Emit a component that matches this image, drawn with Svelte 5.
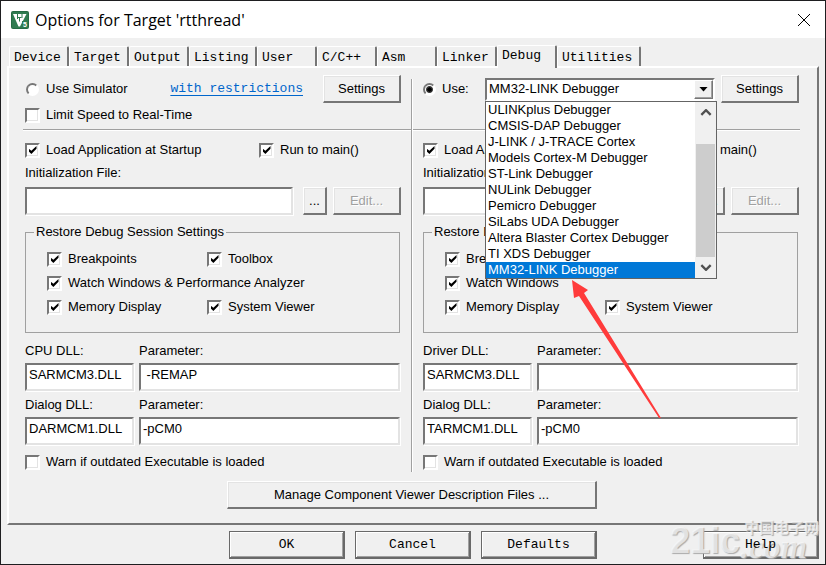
<script>
  const tabs = ['Device', 'Target', 'Output', 'Listing', 'User', 'C/C++', 'Asm', 'Linker', 'Debug', 'Utilities'];
  let activeTab = $state('Debug');

  const debuggers = [
    'ULINKplus Debugger',
    'CMSIS-DAP Debugger',
    'J-LINK / J-TRACE Cortex',
    'Models Cortex-M Debugger',
    'ST-Link Debugger',
    'NULink Debugger',
    'Pemicro Debugger',
    'SiLabs UDA Debugger',
    'Altera Blaster Cortex Debugger',
    'TI XDS Debugger',
    'MM32-LINK Debugger'
  ];
  let selected = $state('MM32-LINK Debugger');
  let mode = $state('target');

  const panes = $state([
    {
      id: 'sim',
      watch: 'Watch Windows & Performance Analyzer',
      rows: [
        { label: 'CPU DLL:', dll: 'SARMCM3.DLL', param: ' -REMAP' },
        { label: 'Dialog DLL:', dll: 'DARMCM1.DLL', param: '-pCM0' }
      ]
    },
    {
      id: 'target',
      watch: 'Watch Windows',
      rows: [
        { label: 'Driver DLL:', dll: 'SARMCM3.DLL', param: '' },
        { label: 'Dialog DLL:', dll: 'TARMCM1.DLL', param: '-pCM0' }
      ]
    }
  ]);
</script>

{#snippet check(text, checked = true)}
  <label class="check"><input type="checkbox" {checked}><span>{text}</span></label>
{/snippet}

<div class="dialog">
  <header>
    <svg class="logo" viewBox="0 0 18 18" aria-hidden="true">
      <rect width="18" height="18" rx="2" fill="#246b43" />
      <rect x="1" y="1" width="16" height="16" rx="1" fill="#2f7b50" />
      <path d="M2 3h13.500L9 15.500H7.500z" fill="#fff" />
      <path d="M6.500 3v5M11 3v4M6.500 6.500h4M8.500 6.500v4" stroke="#2f7b50" fill="none" />
      <rect x="11" y="10" width="6" height="7" fill="#2f7b50" />
      <text x="12" y="16" font-size="7" font-weight="bold" fill="#fff">5</text>
    </svg>
    <h1>Options for Target 'rtthread'</h1>
    <button class="close" aria-label="Close">
      <svg viewBox="0 0 12 12"><path d="M0 0l12 12M12 0L0 12" stroke="#000" fill="none" /></svg>
    </button>
  </header>

  <nav role="tablist">
    {#each tabs as tab}
      <button
        role="tab"
        class="tab"
        class:active={tab === activeTab}
        aria-selected={tab === activeTab}
        style:width="{Math.max(60, tab.length * 8 + 12)}px"
        onclick={() => (activeTab = tab)}
      >{tab}</button>
    {/each}
  </nav>

  <main>
    <div class="panes">
      {#each panes as pane}
        <section class={pane.id}>
          <div class="top">
            {#if pane.id === 'sim'}
              <div class="line">
                <label class="check"><input type="radio" name="mode" value="sim" bind:group={mode}><span>Use Simulator</span></label>
                <a href="#restrictions">with restrictions</a>
                <button class="btn settings">Settings</button>
              </div>
              {@render check('Limit Speed to Real-Time', false)}
            {:else}
              <div class="line">
                <label class="check use"><input type="radio" name="mode" value="target" bind:group={mode}><span>Use:</span></label>
                <div class="combo">
                  <select aria-label="Debugger" bind:value={selected}>
                    {#each debuggers as name}
                      <option>{name}</option>
                    {/each}
                  </select>
                  <span class="drop"></span>
                  <div class="list">
                    <ul role="listbox" aria-label="Debuggers">
                      {#each debuggers as name}
                        <li role="option" aria-selected={name === selected}>{name}</li>
                      {/each}
                    </ul>
                    <div class="scroll">
                      <svg viewBox="0 0 10 6"><path d="M1 5l4-4 4 4" /></svg>
                      <div class="thumb"></div>
                      <svg viewBox="0 0 10 6"><path d="M1 1l4 4 4-4" /></svg>
                    </div>
                  </div>
                  <svg class="pointer" viewBox="0 0 90 140" aria-hidden="true">
                    <path d="M0 0L16 10 12 13 89 138H87L7 16 2 18z" fill="#ff3b3b" />
                  </svg>
                </div>
                <button class="btn settings">Settings</button>
              </div>
            {/if}
          </div>
          <hr>

          <div class="startup">
            {@render check('Load Application at Startup')}
            {@render check('Run to main()')}
          </div>
          <label class="caption" for="{pane.id}-init">Initialization File:</label>
          <div class="file">
            <input id="{pane.id}-init" type="text">
            <button class="btn browse">...</button>
            <button class="btn edit" disabled>Edit...</button>
          </div>

          <fieldset>
            <legend>Restore Debug Session Settings</legend>
            <div class="restore">
              {@render check('Breakpoints')}
              {@render check('Toolbox')}
              <div class="full">{@render check(pane.watch)}</div>
              {@render check('Memory Display')}
              {@render check('System Viewer')}
            </div>
          </fieldset>

          <div class="dlls">
            {#each pane.rows as row, i}
              <div>
                <label for="{pane.id}-dll{i}">{row.label}</label>
                <input id="{pane.id}-dll{i}" type="text" bind:value={row.dll}>
              </div>
              <div>
                <label for="{pane.id}-param{i}">Parameter:</label>
                <input id="{pane.id}-param{i}" type="text" bind:value={row.param}>
              </div>
            {/each}
          </div>
          {@render check('Warn if outdated Executable is loaded', false)}
        </section>
      {/each}
    </div>
    <button class="btn manage">Manage Component Viewer Description Files ...</button>
  </main>

  <footer>
    <div class="actions">
      <button>OK</button>
      <button>Cancel</button>
      <button>Defaults</button>
    </div>
    <button class="help"><span>Help</span></button>
    <div class="mark">
      <b>21ic</b>
      <div><span>中国电子网</span><i>.com</i></div>
    </div>
  </footer>
</div>

<style>
  :global(body) {
    background: #f0f0f0;
  }
  .dialog {
    box-sizing: border-box;
    min-width: 780px;
    border: 1px solid #1e1e20;
    background: #f0f0f0;
    color: #000;
    font: 13px/16px "Liberation Sans", Arial, sans-serif;
    padding-bottom: 5px;
  }
  button, input, select {
    box-sizing: border-box;
    margin: 0;
    font: inherit;
    color: inherit;
    border-radius: 0;
  }

  header {
    display: flex;
    align-items: center;
    height: 37px;
    padding: 0 15px 0 10px;
    background: #fff;
  }
  .logo {
    width: 18px;
    height: 18px;
  }
  h1 {
    flex: 1;
    margin: 0 0 0 6px;
    font: 16px/24px "Open Sans", "Noto Sans", sans-serif;
  }
  .close {
    display: flex;
    padding: 0;
    border: 0;
    background: none;
  }
  .close svg {
    width: 12px;
    height: 12px;
  }

  nav {
    display: flex;
    align-items: flex-end;
    height: 21px;
    margin: 7px 6px 0;
    padding-left: 2px;
  }
  .tab {
    height: 20px;
    padding: 2px 4px 0;
    border: solid;
    border-width: 1px 2px 0 1px;
    border-color: #fff #767676 #fff #fff;
    border-radius: 2px 2px 0 0;
    background: #f0f0f0;
    font: 13px/16px "Liberation Mono", monospace;
    text-align: left;
    white-space: nowrap;
  }
  .tab.active {
    z-index: 1;
    height: 23px;
    margin-bottom: -2px;
    padding-bottom: 4px;
  }

  main {
    margin: 0 6px;
    padding: 7px 18px 14px 16px;
    border: 2px solid;
    border-color: #fff #767676 #767676 #fff;
  }
  .panes {
    display: grid;
    grid-template-columns: 1fr 1fr;
    gap: 22px;
    background: linear-gradient(90deg, #a0a0a0 50%, #fff 50%) center bottom / 2px calc(100% - 4px) no-repeat;
  }
  section {
    min-width: 0;
  }
  .top {
    height: 54px;
  }
  .line {
    display: flex;
    align-items: center;
    height: 28px;
    margin-bottom: 2px;
  }
  hr {
    height: 1px;
    margin: 0 -10px 0 -2px;
    border: 0;
    border-bottom: 1px solid #fff;
    background: #a0a0a0;
  }
  .target hr {
    margin: 0 -1px 0 -10px;
  }
  a {
    margin: 0 20px 0 auto;
    color: #0066cc;
    font: 13px/16px "Liberation Mono", monospace;
    text-underline-offset: 3px;
  }

  .check {
    display: flex;
    align-items: center;
    height: 20px;
    white-space: nowrap;
  }
  .check input {
    appearance: none;
    flex: none;
    display: grid;
    place-items: center;
    width: 15px;
    height: 15px;
    margin-right: 6px;
    border: 2px solid;
    border-color: #777 #fff #fff #777;
    background: #fff;
    box-shadow: inset -1px -1px #e3e3e3;
  }
  .check input:checked::before {
    content: '';
    width: 8px;
    height: 8px;
    background: #000;
    clip-path: polygon(0 30%, 36% 60%, 100% 0, 100% 35%, 36% 100%, 0 65%);
  }
  .check input[type='radio'] {
    width: 13px;
    height: 13px;
    margin: 0 7px 0 1px;
    border-radius: 50%;
    box-shadow: none;
  }
  .check input[type='radio']:checked::before {
    width: 5px;
    height: 5px;
    border-radius: 50%;
    outline: 1px solid #000;
    clip-path: none;
  }
  .use {
    width: 62px;
  }
  .use input[type='radio'] {
    margin: 0 6px 0 0;
  }

  .btn {
    height: 28px;
    padding: 0 4px;
    border: solid;
    border-width: 1px 2px 2px 1px;
    border-color: #fff #767676 #767676 #fff;
    background: #f0f0f0;
    box-shadow: inset 1px 1px #e3e3e3;
  }
  .btn:disabled {
    color: #a0a0a0;
    text-shadow: 1px 1px #fff;
  }
  .settings {
    width: 78px;
  }

  .combo {
    position: relative;
    flex: 1;
    margin-right: 6px;
  }
  select {
    display: block;
    appearance: none;
    width: 100%;
    height: 23px;
    padding: 0 22px 0 2px;
    border: 2px solid;
    border-color: #777 #fff #fff #777;
    background: #fff;
  }
  .drop {
    position: absolute;
    top: 2px;
    right: 2px;
    box-sizing: border-box;
    width: 19px;
    height: 19px;
    border: 1px solid;
    border-color: #fff #767676 #767676 #fff;
    background: #f0f0f0;
    box-shadow: inset -1px -1px #a0a0a0;
    pointer-events: none;
  }
  .drop::after {
    content: '';
    display: block;
    width: 9px;
    height: 5px;
    margin: 6px 4px;
    background: #000;
    clip-path: polygon(0 0, 100% 0, 50% 100%);
  }
  .list {
    position: absolute;
    top: 23px;
    left: 0;
    right: -2px;
    z-index: 2;
    display: flex;
    border: 1px solid #646464;
    background: #fff;
  }
  ul {
    flex: 1;
    margin: 0;
    padding: 0;
    list-style: none;
  }
  li {
    padding: 0 2px;
    white-space: nowrap;
  }
  li[aria-selected='true'] {
    background: #0078d7;
    color: #fff;
  }
  .scroll {
    display: flex;
    flex-direction: column;
    align-items: center;
    width: 21px;
    background: #f0f0f0;
  }
  .scroll svg {
    width: 12px;
    height: 7px;
    margin: 7px 0;
    fill: none;
    stroke: #505050;
    stroke-width: 2;
  }
  .thumb {
    flex: 1;
    width: 19px;
    margin-top: 21px;
    background: #cdcdcd;
  }
  .pointer {
    position: absolute;
    top: 202px;
    left: 87px;
    z-index: 3;
    width: 90px;
    height: 140px;
    pointer-events: none;
  }

  .startup {
    display: grid;
    grid-template-columns: 234px 1fr;
    margin-top: 9px;
  }
  .caption {
    display: block;
    margin: 5px 0 6px;
  }
  input[type='text'] {
    width: 100%;
    height: 28px;
    padding: 0 2px 5px;
    border: 2px solid;
    border-color: #777 #e3e3e3 #e3e3e3 #777;
    outline: 0;
    background: #fff;
    box-shadow: 1px 1px #fff;
  }
  .file {
    display: flex;
  }
  .file input {
    flex: 1;
    min-width: 0;
  }
  .browse {
    width: 24px;
    margin: 0 6px 0 10px;
  }
  .edit {
    width: 68px;
  }

  fieldset {
    margin: 9px 1px 0 0;
    padding: 7px 0 13px 21px;
    border: 1px solid #a0a0a0;
    box-shadow: none;
  }
  legend {
    margin-left: -13px;
    padding: 0 2px;
  }
  .restore {
    display: grid;
    grid-template-columns: 160px 1fr;
    grid-auto-rows: 24px;
    align-items: center;
  }
  .full {
    grid-column: span 2;
  }

  .dlls {
    display: grid;
    grid-template-columns: 109px 1fr;
    gap: 6px 5px;
    margin: 10px 1px 7px 0;
  }
  .dlls label {
    display: block;
    margin-bottom: 4px;
  }

  .manage {
    display: block;
    width: 370px;
    margin: 9px auto 0;
  }

  footer {
    position: relative;
    display: grid;
    grid-template-columns: 1fr auto 1fr;
    margin: 6px 6px 0;
  }
  .actions {
    grid-column: 2;
    display: flex;
    gap: 10px;
  }
  footer button {
    width: 116px;
    height: 28px;
    padding: 0;
    border: solid #696969;
    border-width: 1px 2px 2px 1px;
    background: #f0f0f0;
    box-shadow: inset 1px 1px #fff, inset -1px -1px #a0a0a0;
    font: 13px/16px "Liberation Mono", monospace;
  }
  .help {
    justify-self: end;
  }
  .help span {
    position: relative;
    z-index: 2;
  }
  .mark {
    position: absolute;
    right: 0;
    bottom: 0;
    z-index: 1;
    display: flex;
    align-items: flex-end;
    color: rgba(250, 250, 250, 0.7);
    text-shadow: 1px 1px 1px #aaa;
    pointer-events: none;
  }
  .mark b {
    font: bold 36px/36px "Liberation Sans", Arial, sans-serif;
  }
  .mark div {
    display: flex;
    flex-direction: column;
  }
  .mark span {
    margin-left: 4px;
    font: bold 15px/16px "Noto Sans CJK SC", sans-serif;
  }
  .mark i {
    font: italic bold 34px/24px "Liberation Serif", serif;
  }
</style>
